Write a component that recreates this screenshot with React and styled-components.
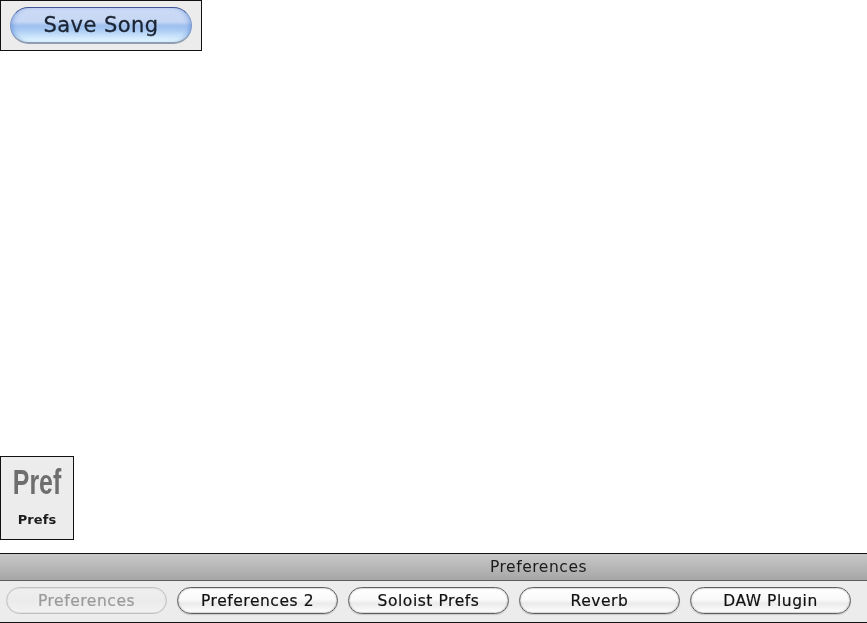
import React from "react";
import styled, { createGlobalStyle } from "styled-components";

const Global = createGlobalStyle`
  html, body { margin: 0; padding: 0; background: #fff; }
  #root { width: 867px; height: 623px; overflow: hidden; }
`;

const Page = styled.div`
  width: 867px;
  height: 623px;
  display: flex;
  flex-direction: column;
  font-family: "DejaVu Sans", sans-serif;
`;

const SaveFrame = styled.div`
  width: 202px;
  height: 51px;
  box-sizing: border-box;
  border: 1px solid #111;
  background: #ececec;
  display: flex;
  align-items: center;
  justify-content: center;
`;

const AquaButton = styled.div`
  width: 182px;
  height: 37px;
  box-sizing: border-box;
  border-radius: 19px;
  border: 1px solid #7d98c8;
  border-top: 1.5px solid #3f5595;
  border-bottom: 2px solid #8f9db0;
  background: linear-gradient(
    to bottom,
    #ccdaf5 0%,
    #c6d8f5 40%,
    #a0c0ee 52%,
    #a8c9f3 64%,
    #cce6fb 85%,
    #e8f9ff 100%
  );
  box-shadow: inset 4px 0 5px -3px rgba(70, 120, 210, 0.55),
    inset -4px 0 5px -3px rgba(70, 120, 210, 0.55);
  display: flex;
  align-items: center;
  justify-content: center;
  font-size: 21px;
  letter-spacing: 0.45px;
  color: #1a2433;
  -webkit-text-stroke: 0.3px #1a2433;
  filter: blur(0.45px);
`;

const PrefTile = styled.div`
  width: 74px;
  height: 84px;
  margin-top: 405px;
  box-sizing: border-box;
  border: 1px solid #111;
  background: #ececec;
  display: flex;
  flex-direction: column;
  align-items: center;
`;

const PrefGlyph = styled.div`
  font-family: "Liberation Sans", sans-serif;
  font-weight: 700;
  font-size: 35px;
  line-height: 40px;
  margin-top: 5px;
  color: #6e6e6e;
  transform: scaleX(0.71);
  filter: blur(0.6px);
`;

const PrefLabel = styled.div`
  font-family: "DejaVu Sans", sans-serif;
  font-weight: 700;
  font-size: 13px;
  line-height: 16px;
  margin-top: 10px;
  letter-spacing: 0.1px;
  color: #1c1c1c;
  filter: blur(0.3px);
`;

const Panel = styled.div`
  margin-top: 13px;
  width: 867px;
  height: 70px;
  box-sizing: border-box;
  border-top: 1px solid #111;
  border-bottom: 1px solid #111;
  background: #ececec;
  display: flex;
  flex-direction: column;
`;

const TitleBar = styled.div`
  height: 26px;
  flex: none;
  border-bottom: 1px solid #5e5e5e;
  background: linear-gradient(to bottom, #c8c8c8 0%, #a6a6a6 100%);
  display: flex;
  align-items: center;
  justify-content: center;
  padding-left: 210px;
  font-size: 15.5px;
  letter-spacing: 0.55px;
  color: #1a1a1a;
`;

const TitleText = styled.span`
  filter: blur(0.3px);
`;

const TabRow = styled.div`
  display: flex;
  gap: 10px;
  padding: 6px 0 0 6px;
`;

const Tab = styled.div`
  width: 161px;
  height: 27px;
  box-sizing: border-box;
  border-radius: 14px;
  border: 1px solid ${(p) => (p.$disabled ? "#c0c0c0" : "#606060")};
  background: ${(p) =>
    p.$disabled
      ? "linear-gradient(to bottom, #efefef 0%, #ebebeb 50%, #f2f2f2 100%)"
      : "linear-gradient(to bottom, #ffffff 0%, #fafafa 45%, #ebebeb 62%, #ffffff 100%)"};
  box-shadow: ${(p) =>
    p.$disabled
      ? "inset 0 0 0 1px #e0e0e0"
      : "inset 0 0 1px 1px rgba(90,90,90,0.25), 0 1px 1px rgba(0,0,0,0.15)"};
  color: ${(p) => (p.$disabled ? "#9a9a9a" : "#111")};
  display: flex;
  align-items: center;
  justify-content: center;
  font-size: 15.5px;
  letter-spacing: 0.55px;
  -webkit-text-stroke: ${(p) => (p.$disabled ? "0.2px #9a9a9a" : "0.2px #111")};
  filter: blur(0.3px);
`;

const tabs = ["Preferences 2", "Soloist Prefs", "Reverb", "DAW Plugin"];

export default function App() {
  return (
    <Page>
      <Global />
      <SaveFrame>
        <AquaButton>Save Song</AquaButton>
      </SaveFrame>
      <PrefTile>
        <PrefGlyph>Pref</PrefGlyph>
        <PrefLabel>Prefs</PrefLabel>
      </PrefTile>
      <Panel>
        <TitleBar>
          <TitleText>Preferences</TitleText>
        </TitleBar>
        <TabRow>
          <Tab $disabled>Preferences</Tab>
          {tabs.map((t) => (
            <Tab key={t}>{t}</Tab>
          ))}
        </TabRow>
      </Panel>
    </Page>
  );
}
